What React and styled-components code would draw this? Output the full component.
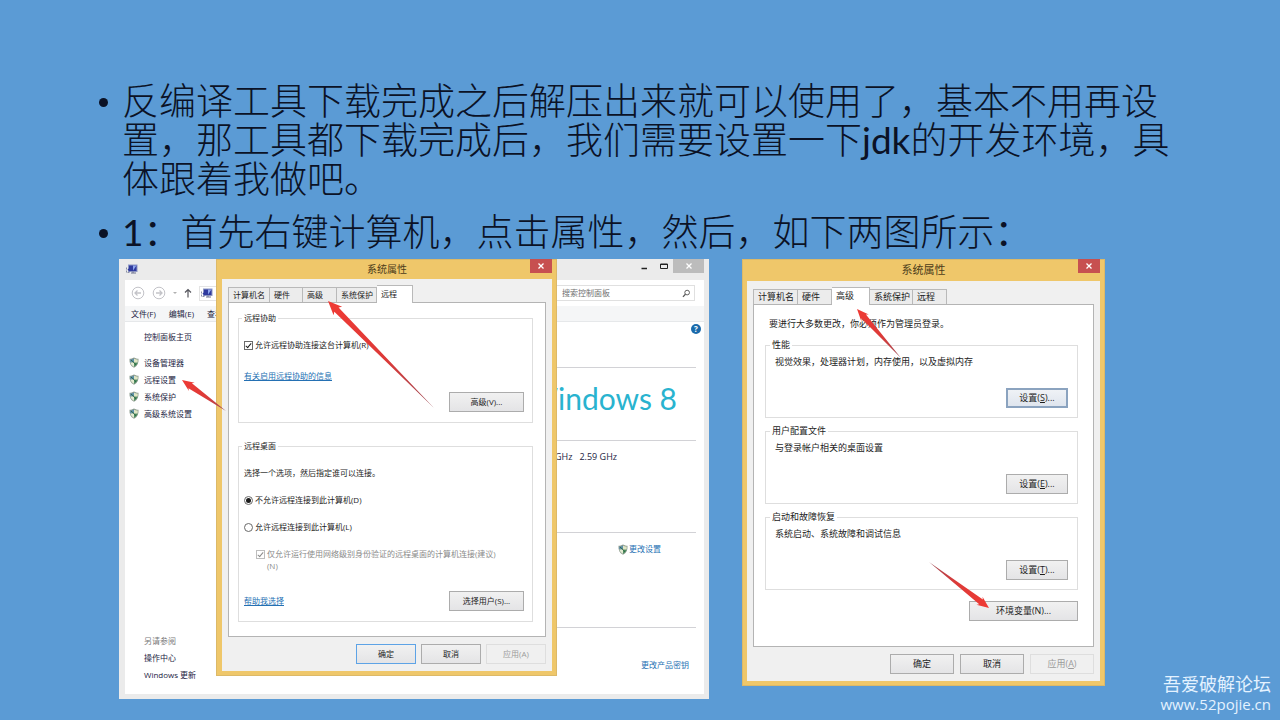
import React from "react";
import styled, { createGlobalStyle, css } from "styled-components";

const GlobalStyle = createGlobalStyle`
  *, *::before, *::after { box-sizing: border-box; }
  body { margin: 0; background: #5b9bd5; }
  button, input { font: inherit; color: inherit; }
  fieldset { min-width: 0; }
`;

/* ---------- slide ---------- */

const Slide = styled.main`
  position: relative;
  min-height: 100vh;
  padding: 81px 0 20px 98px;
  background: #5b9bd5;
  color: #0b1226;
`;

const Bullets = styled.ul`
  list-style: none;
  margin: 0;
  padding: 0;
  font-family: Lato, "Noto Sans CJK SC", sans-serif;
  font-weight: 300;
  font-size: 37px;
  line-height: 39px;
`;

const Bullet = styled.li`
  display: flex;
  & + & { margin-top: 14px; }
`;

const Dot = styled.span`
  flex: none;
  width: 9px;
  height: 9px;
  margin: 17px 14px 0 1px;
  border-radius: 50%;
  background: #0b1226;
`;

const Line = styled.span`
  display: block;
  white-space: nowrap;
`;

const Latin = styled.span`
  font-weight: 400;
`;

const Figures = styled.div`
  display: flex;
  align-items: flex-start;
  gap: 33px;
  margin: 8px 0 0 21px;
`;

const Figure = styled.section`
  position: relative;
  flex: none;
  width: ${(p) => p.$width}px;
`;

const Watermark = styled.aside`
  position: absolute;
  right: 9px;
  bottom: 6px;
  text-align: right;
  color: #e4f2ff;
  font: 18px/22px "Noto Sans CJK SC", sans-serif;
`;

const Site = styled.a`
  display: block;
  color: inherit;
  text-decoration: none;
  font: 15px/20px "Open Sans", sans-serif;
`;

/* ---------- control panel window ---------- */

const uiFont = `"Open Sans", "Noto Sans CJK SC", sans-serif`;

const Panel = styled.div`
  display: flex;
  flex-direction: column;
  min-height: 440px;
  padding: 0 5px 5px 6px;
  background: #ebebeb;
  color: #23233f;
  font: 8px/12px ${uiFont};
  white-space: nowrap;
`;

const PanelTitle = styled.header`
  display: flex;
  align-items: flex-start;
  justify-content: space-between;
  height: 21px;
  svg { margin-top: 5px; }
`;

const Caption = styled.div`
  display: flex;
`;

const CaptionButton = styled.button`
  display: grid;
  place-items: center;
  width: ${(p) => (p.$close ? 31 : 19)}px;
  height: 14px;
  padding: 0;
  border: 0;
  background: ${(p) => (p.$close ? "#bcbcbc" : "transparent")};
  svg { margin: 0; }
`;

const NavBar = styled.div`
  display: flex;
  align-items: center;
  height: 26px;
  padding: 0 9px 0 6px;
  background: #fff;
`;

const NavIcons = styled.div`
  display: flex;
  align-items: center;
  gap: 7px;
  flex: 1;
`;

const NavButton = styled.button`
  display: grid;
  place-items: center;
  padding: 0;
  border: 0;
  background: none;
`;

const Address = styled.div`
  display: flex;
  align-items: center;
  height: 15px;
  width: 120px;
  border: 1px solid #e4e4e4;
`;

const Search = styled.label`
  display: flex;
  align-items: center;
  width: 150px;
  height: 16px;
  padding: 0 4px 0 16px;
  border: 1px solid #e0e0e0;
  input {
    width: 100%;
    min-width: 0;
    padding: 0;
    border: 0;
    outline: 0;
    background: none;
  }
  input::placeholder { color: #707070; opacity: 1; }
`;

const MenuBar = styled.nav`
  display: flex;
  gap: 13px;
  height: 16px;
  padding-left: 6px;
  background: #f5f6f7;
  border-bottom: 1px solid #e6e8ea;
`;

const MenuItem = styled.button`
  padding: 0;
  border: 0;
  background: none;
`;

const PanelBody = styled.div`
  flex: 1;
  display: flex;
  background: #fff;
`;

const Sidebar = styled.nav`
  display: flex;
  flex-direction: column;
  width: 92px;
  padding: 9px 0 11px 4px;
`;

const SideHome = styled.a`
  margin: 0 0 11px 15px;
  color: inherit;
  text-decoration: none;
`;

const SideLink = styled.a`
  display: flex;
  align-items: center;
  gap: 5px;
  height: 17px;
  padding-left: ${(p) => (p.$indent ? 15 : 0)}px;
  color: inherit;
  text-decoration: none;
`;

const SeeAlso = styled.div`
  margin-top: auto;
`;

const SideLabel = styled.div`
  height: 17px;
  padding-left: 15px;
  line-height: 17px;
  color: #7a7a7a;
`;

const Content = styled.div`
  flex: 1;
  display: flex;
  flex-direction: column;
  padding-right: 8px;
`;

const Section = styled.section`
  display: flex;
  justify-content: flex-end;
  align-items: flex-start;
  height: ${(p) => p.$height}px;
  padding: ${(p) => p.$top}px ${(p) => p.$right}px 0 0;
  ${(p) => p.$rule && css`border-bottom: 1px solid #d2d2d6;`}
`;

const Help = styled.button`
  display: grid;
  place-items: center;
  width: 10px;
  height: 10px;
  margin-right: -5px;
  padding: 0;
  border: 0;
  border-radius: 50%;
  background: #1a6aab;
  color: #fff;
  font-size: 8px;
  font-weight: 700;
  line-height: 10px;
`;

const Brand = styled.div`
  color: #29b3cf;
  font: 400 30px/40px Lato, sans-serif;
`;

const Speed = styled.span`
  font-size: 9px;
  white-space: pre;
`;

const BlueLink = styled.a`
  display: inline-flex;
  align-items: center;
  gap: 1px;
  color: #2470b3;
  text-decoration: ${(p) => (p.$underline ? "underline" : "none")};
`;

/* ---------- property dialogs ---------- */

const Dialog = styled.div`
  display: flex;
  flex-direction: column;
  width: ${(p) => p.$width}px;
  padding: 0 5px 5px;
  background: #efc76a;
  box-shadow: inset 0 0 0 1px #dcb968;
  color: #1c1c1c;
  font: ${(p) => p.$size}px/12px ${uiFont};
  white-space: nowrap;
  ${(p) => p.$floating && css`
    position: absolute;
    top: 0;
    left: 97px;
    padding-left: 6px;
  `}
`;

const DialogTitle = styled.header`
  display: grid;
  grid-template-columns: 1fr auto 1fr;
  height: ${(p) => p.$height}px;
  h2 {
    grid-column: 2;
    margin: 0;
    color: #4c3c1a;
    font-weight: 400;
    font-size: ${(p) => p.$size}px;
    line-height: ${(p) => p.$height}px;
  }
`;

const CloseButton = styled.button`
  justify-self: end;
  display: grid;
  place-items: center;
  width: 22px;
  height: 14px;
  padding: 0;
  border: 0;
  background: #c75050;
`;

const Client = styled.div`
  padding: 6px 6px 7px;
  background: #f0f0f0;
`;

const Tabs = styled.div`
  display: flex;
  align-items: flex-end;
  height: 17px;
`;

const Tab = styled.button`
  position: relative;
  width: ${(p) => p.$width}px;
  height: 15px;
  padding: 0 0 0 4px;
  border: 1px solid #b9b9b9;
  border-bottom: 0;
  background: #ececec;
  text-align: left;
  & + & { border-left: 0; }
  ${(p) => p.$active && css`
    height: 18px;
    margin-bottom: -1px;
    padding-bottom: 2px;
    background: #fff;
  `}
`;

const Page = styled.div`
  padding: ${(p) => p.$pad};
  border: 1px solid #b4b4b4;
  background: #fff;
`;

const Group = styled.fieldset`
  display: block;
  margin: 0;
  padding: ${(p) => p.$pad};
  border: 1px solid #dedede;
  &:not(:first-of-type) { margin-top: ${(p) => p.$gap}px; }
  legend {
    margin-left: ${(p) => p.$legend}px;
    padding: 0 2px;
  }
`;

const Row = styled.div`
  display: flex;
  align-items: center;
  justify-content: ${(p) => p.$justify || "flex-start"};
  margin-top: ${(p) => p.$top}px;
  padding-left: ${(p) => p.$indent || 0}px;
`;

const Notice = styled.p`
  margin: 0 0 9px 4px;
`;

const Choice = styled.label`
  display: flex;
  align-items: flex-start;
  gap: 2px;
  color: ${(p) => (p.$muted ? "#8a8a8a" : "inherit")};
`;

const Tick = styled.input`
  appearance: none;
  flex: none;
  width: 9px;
  height: 9px;
  margin: 2px 0 0;
  border: 1px solid #6a6a6a;
  background: #fff;
  &:checked::after {
    content: "";
    display: block;
    width: 3px;
    height: 6px;
    margin: 0 0 0 2px;
    border: solid currentColor;
    border-width: 0 1px 1px 0;
    transform: rotate(40deg);
  }
  &:disabled { border-color: #bdbdbd; }
`;

const Radio = styled.input`
  appearance: none;
  flex: none;
  width: 9px;
  height: 9px;
  margin: 2px 0 0;
  border: 1px solid #6a6a6a;
  border-radius: 50%;
  background: #fff;
  &:checked::after {
    content: "";
    display: block;
    width: 5px;
    height: 5px;
    margin: 1px;
    border-radius: 50%;
    background: #1c1c1c;
  }
`;

const PushButton = styled.button`
  width: ${(p) => p.$width}px;
  height: 20px;
  padding: 0;
  border: 1px solid #acacac;
  background: linear-gradient(#f1f1f1, #e4e4e6);
  ${(p) => p.$primary && css`border-color: #5da3e6;`}
  ${(p) => p.$focused && css`
    border: 2px solid #8ba3bf;
    background: linear-gradient(#eff2f6, #dfe5ee);
  `}
  &:disabled {
    border-color: #dedede;
    background: #f0f0f0;
    color: #9b9b9b;
  }
`;

const Footer = styled.footer`
  display: flex;
  justify-content: flex-end;
  gap: ${(p) => p.$gap}px;
  margin-top: 7px;
`;

const Overlay = styled.svg`
  position: absolute;
  inset: 0;
  width: 100%;
  height: 100%;
  overflow: visible;
  pointer-events: none;
`;

/* ---------- drawings ---------- */

function Arrow({ id, from, to, head = 12, wing = 5, shaft = 3 }) {
  const dx = to[0] - from[0];
  const dy = to[1] - from[1];
  const len = Math.hypot(dx, dy);
  const at = (along, side) =>
    `${to[0] - (dx / len) * along - (dy / len) * side},${to[1] - (dy / len) * along + (dx / len) * side}`;
  const points = [
    at(len, 0), at(head - 2, shaft), at(head, wing), at(0, 0), at(head, -wing), at(head - 2, -shaft),
  ].join(" ");
  return (
    <>
      <linearGradient id={id} gradientUnits="userSpaceOnUse" x1={from[0]} y1={from[1]} x2={to[0]} y2={to[1]}>
        <stop offset="0" stopColor="#9c4a55" />
        <stop offset="0.45" stopColor="#dc3a38" />
        <stop offset="1" stopColor="#f03a34" />
      </linearGradient>
      <polygon points={points} fill={`url(#${id})`} />
    </>
  );
}

const Shield = () => (
  <svg width="10" height="11" viewBox="0 0 10 11" aria-hidden="true">
    <path d="M5 0.5 C6.5 1.5 8 1.7 9.5 1.7 C9.8 6 8.5 9 5 10.7 C1.5 9 0.2 6 0.5 1.7 C2 1.7 3.5 1.5 5 0.5Z" fill="#8b9a8d" />
    <path d="M5 1.5 V5.5 H1.4 C1.2 4.5 1.2 3.5 1.3 2.6 C3 2.5 4 2.2 5 1.5Z" fill="#5f8fae" />
    <path d="M5 5.5 H8.6 C8 7.6 7 8.8 5 9.8Z" fill="#4f8f62" />
    <path d="M5 1.5 C6 2.2 7 2.5 8.7 2.6 C8.8 3.5 8.8 4.5 8.6 5.5 H5Z" fill="#dfe6c4" />
    <path d="M5 5.5 V9.8 C3 8.8 2 7.6 1.4 5.5Z" fill="#e3ead0" />
    <path d="M2 3 L5 5.6 L7 8" stroke="#2d6a45" strokeWidth="1" fill="none" />
  </svg>
);

const Monitor = () => (
  <svg width="13" height="11" viewBox="0 0 13 11" aria-hidden="true">
    <rect x="3.5" y="1" width="8.5" height="6.5" fill="#2f3a9e" stroke="#8e97c4" />
    <path d="M8 1.5 L11.5 1.5 L8 6.5Z" fill="#8fa6ee" />
    <path d="M6 9 H11 M8 7.5 V9" stroke="#6d7390" />
    <path d="M1.5 3.5 V8.5 H4.5" stroke="#8b90a5" fill="none" strokeDasharray="2 1" />
    <path d="M3 5 L5 7" stroke="#2f3a9e" strokeWidth="1.4" />
  </svg>
);

const RoundArrow = ({ flip }) => (
  <svg width="14" height="14" viewBox="0 0 14 14" fill="none" stroke="#c3c3c8" aria-hidden="true">
    <circle cx="7" cy="7" r="5.8" />
    <path d={flip ? "M4 7 H10 M7.5 4.5 L10 7 L7.5 9.5" : "M10 7 H4 M6.5 4.5 L4 7 L6.5 9.5"} strokeWidth="1.3" />
  </svg>
);

const Cross = ({ color = "#fff" }) => (
  <svg width="6" height="6" viewBox="0 0 6 6" stroke={color} strokeWidth="1.3" aria-hidden="true">
    <path d="M0.5 0.5 L5.5 5.5 M5.5 0.5 L0.5 5.5" />
  </svg>
);

/* ---------- parts ---------- */

function TabStrip({ widths, active }) {
  const names = ["计算机名", "硬件", "高级", "系统保护", "远程"];
  return (
    <Tabs role="tablist">
      {names.map((name, i) => (
        <Tab key={name} role="tab" aria-selected={i === active} $width={widths[i]} $active={i === active}>
          {name}
        </Tab>
      ))}
    </Tabs>
  );
}

function ControlPanel() {
  return (
    <Panel>
      <PanelTitle>
        <Monitor />
        <Caption>
          <CaptionButton aria-label="最小化">
            <svg width="7" height="8" viewBox="0 0 7 8"><path d="M0.5 6.5 H6" stroke="#222" strokeWidth="1.5" /></svg>
          </CaptionButton>
          <CaptionButton aria-label="最大化">
            <svg width="8" height="7" viewBox="0 0 8 7"><path d="M0.5 1 H7.5 V5.5 H0.5Z M0.5 1.5 H7.5" stroke="#222" fill="none" /></svg>
          </CaptionButton>
          <CaptionButton $close aria-label="关闭"><Cross /></CaptionButton>
        </Caption>
      </PanelTitle>
      <NavBar>
        <NavIcons>
          <NavButton aria-label="后退"><RoundArrow /></NavButton>
          <NavButton aria-label="前进"><RoundArrow flip /></NavButton>
          <svg width="4" height="4" viewBox="0 0 4 4" aria-hidden="true"><path d="M0 1 H4 L2 3Z" fill="#b0b0b0" /></svg>
          <NavButton aria-label="上移">
            <svg width="8" height="10" viewBox="0 0 8 10" fill="none" stroke="#55555c" strokeWidth="1.2">
              <path d="M4 9.5 V1.5 M1 4.5 L4 1.5 L7 4.5" />
            </svg>
          </NavButton>
          <Address><Monitor /></Address>
        </NavIcons>
        <Search>
          <input type="search" placeholder="搜索控制面板" aria-label="搜索控制面板" />
          <svg width="9" height="9" viewBox="0 0 9 9" fill="none" stroke="#555" aria-hidden="true">
            <circle cx="5.5" cy="3.5" r="2.5" /><path d="M3.7 5.3 L1 8.2" strokeWidth="1.3" />
          </svg>
        </Search>
      </NavBar>
      <MenuBar>
        <MenuItem>文件(F)</MenuItem>
        <MenuItem>编辑(E)</MenuItem>
        <MenuItem>查看(V)</MenuItem>
      </MenuBar>
      <PanelBody>
        <Sidebar>
          <SideHome href="#home">控制面板主页</SideHome>
          {["设备管理器", "远程设置", "系统保护", "高级系统设置"].map((name) => (
            <SideLink key={name} href="#settings"><Shield />{name}</SideLink>
          ))}
          <SeeAlso>
            <SideLabel>另请参阅</SideLabel>
            <SideLink $indent href="#action">操作中心</SideLink>
            <SideLink $indent href="#update">Windows 更新</SideLink>
          </SeeAlso>
        </Sidebar>
        <Content>
          <Section $height={46} $top={2} $right={0} $rule><Help aria-label="帮助">?</Help></Section>
          <Section $height={73} $top={10} $right={19} $rule><Brand>Windows 8</Brand></Section>
          <Section $height={92} $top={10} $right={79} $rule><Speed>{"GHz   2.59 GHz"}</Speed></Section>
          <Section $height={95} $top={10} $right={35} $rule>
            <BlueLink href="#change"><Shield />更改设置</BlueLink>
          </Section>
          <Section $height={66} $top={31} $right={7}>
            <BlueLink href="#key">更改产品密钥</BlueLink>
          </Section>
        </Content>
      </PanelBody>
    </Panel>
  );
}

function RemoteDialog() {
  const group = { $pad: "0 8px 10px 5px", $legend: -2, $gap: 17 };
  return (
    <Dialog $width={341} $size={8} $floating role="dialog" aria-label="系统属性">
      <DialogTitle $height={20} $size={10}>
        <h2>系统属性</h2>
        <CloseButton aria-label="关闭"><Cross /></CloseButton>
      </DialogTitle>
      <Client>
        <TabStrip widths={[42, 33, 34, 40, 36]} active={4} />
        <Page $pad="9px 12px 14px 9px">
          <Group {...group}>
            <legend>远程协助</legend>
            <Row $top={15}>
              <Choice><Tick type="checkbox" defaultChecked />允许远程协助连接这台计算机(R)</Choice>
            </Row>
            <Row $top={19}><BlueLink $underline href="#assist">有关启用远程协助的信息</BlueLink></Row>
            <Row $top={10} $justify="flex-end"><PushButton $width={75}>高级(V)...</PushButton></Row>
          </Group>
          <Group {...group}>
            <legend>远程桌面</legend>
            <Row $top={15}>选择一个选项，然后指定谁可以连接。</Row>
            <Row $top={15}>
              <Choice><Radio type="radio" name="remote" defaultChecked />不允许远程连接到此计算机(D)</Choice>
            </Row>
            <Row $top={15}>
              <Choice><Radio type="radio" name="remote" />允许远程连接到此计算机(L)</Choice>
            </Row>
            <Row $top={15} $indent={12}>
              <Choice $muted>
                <Tick type="checkbox" defaultChecked disabled />
                <span>仅允许运行使用网络级别身份验证的远程桌面的计算机连接(建议)<br />(N)</span>
              </Choice>
            </Row>
            <Row $top={19} $justify="space-between">
              <BlueLink $underline href="#choose">帮助我选择</BlueLink>
              <PushButton $width={75}>选择用户(S)...</PushButton>
            </Row>
          </Group>
        </Page>
        <Footer $gap={5}>
          <PushButton $width={60} $primary>确定</PushButton>
          <PushButton $width={60}>取消</PushButton>
          <PushButton $width={60} disabled>应用(A)</PushButton>
        </Footer>
      </Client>
    </Dialog>
  );
}

function AdvancedDialog() {
  const groups = [
    ["性能", "视觉效果，处理器计划，内存使用，以及虚拟内存", "S"],
    ["用户配置文件", "与登录帐户相关的桌面设置", "E"],
    ["启动和故障恢复", "系统启动、系统故障和调试信息", "T"],
  ];
  return (
    <Dialog $width={363} $size={9} role="dialog" aria-label="系统属性">
      <DialogTitle $height={22} $size={11}>
        <h2>系统属性</h2>
        <CloseButton aria-label="关闭"><Cross /></CloseButton>
      </DialogTitle>
      <Client>
        <TabStrip widths={[45, 34, 38, 43, 34]} active={2} />
        <Page $pad="13px 15px 25px 11px">
          <Notice>要进行大多数更改，你必须作为管理员登录。</Notice>
          {groups.map(([name, text, key], i) => (
            <Group key={name} $pad="0 9px 9px 9px" $legend={-5} $gap={7}>
              <legend>{name}</legend>
              <Row $top={5}>{text}</Row>
              <Row $top={20} $justify="flex-end">
                <PushButton $width={62} $focused={i === 0}>设置(<u>{key}</u>)...</PushButton>
              </Row>
            </Group>
          ))}
          <Row $top={11} $justify="flex-end"><PushButton $width={109}>环境变量(N)...</PushButton></Row>
        </Page>
        <Footer $gap={6}>
          <PushButton $width={64}>确定</PushButton>
          <PushButton $width={64}>取消</PushButton>
          <PushButton $width={64} disabled>应用(<u>A</u>)</PushButton>
        </Footer>
      </Client>
    </Dialog>
  );
}

export default function App() {
  return (
    <>
      <GlobalStyle />
      <Slide lang="zh-CN">
        <Bullets>
          <Bullet>
            <Dot />
            <div>
              <Line>反编译工具下载完成之后解压出来就可以使用了，基本不用再设</Line>
              <Line>置，那工具都下载完成后，我们需要设置一下<Latin>jdk</Latin>的开发环境，具</Line>
              <Line>体跟着我做吧。</Line>
            </div>
          </Bullet>
          <Bullet>
            <Dot />
            <Line><Latin>1：</Latin>首先右键计算机，点击属性，然后，如下两图所示<Latin>：</Latin></Line>
          </Bullet>
        </Bullets>
        <Figures>
          <Figure $width={590}>
            <ControlPanel />
            <RemoteDialog />
            <Overlay>
              <Arrow id="toRemoteLink" from={[107, 152]} to={[63, 121]} head={12} />
              <Arrow id="toAdvancedTab" from={[315, 149]} to={[209, 42]} head={14} wing={6} />
            </Overlay>
          </Figure>
          <Figure $width={363}>
            <AdvancedDialog />
            <Overlay>
              <Arrow id="toActiveTab" from={[159, 99]} to={[115, 50]} head={12} />
              <Arrow id="toVariables" from={[187, 303]} to={[247, 349]} head={12} />
            </Overlay>
          </Figure>
        </Figures>
        <Watermark>
          吾爱破解论坛
          <Site href="#site">www.52pojie.cn</Site>
        </Watermark>
      </Slide>
    </>
  );
}
